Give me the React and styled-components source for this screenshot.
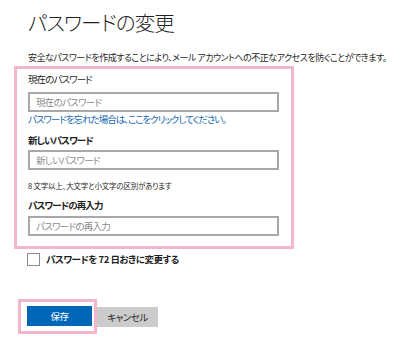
import React from "react";
import styled, { createGlobalStyle } from "styled-components";

const Global = createGlobalStyle`
  html, body { margin: 0; padding: 0; background: #fff; }
  body {
    font-family: "Noto Sans CJK JP", "Noto Sans", sans-serif;
    font-feature-settings: "palt";
    color: #262626;
  }
  * { box-sizing: border-box; }
`;

const Page = styled.div`
  width: 400px;
  height: 347px;
  padding: 9px 0 0 14px;
  display: flex;
  flex-direction: column;
  align-items: flex-start;
`;

const Title = styled.h1`
  margin: 0 0 0 14px;
  font-size: 20.5px;
  line-height: 26px;
  font-weight: 300;
  color: #1f1f1f;
  letter-spacing: -0.9px;
`;

const Intro = styled.p`
  margin: 17px 0 0 14px;
  font-size: 9px;
  line-height: 12px;
  letter-spacing: -0.5px;
  color: #262626;
  white-space: nowrap;
`;

const FormBox = styled.div`
  width: 280px;
  margin-top: 2px;
  border: 3px solid #f4b6cc;
  padding: 3px 12px 10px 11px;
  display: flex;
  flex-direction: column;
`;

const Label = styled.div`
  font-size: 9.5px;
  line-height: 14px;
  letter-spacing: -0.9px;
  font-weight: ${(p) => (p.$bold ? 700 : 400)};
  color: #1f1f1f;
  margin-top: ${(p) => p.$mt || 0}px;
`;

const Input = styled.input`
  width: 251px;
  height: 20px;
  margin-top: ${(p) => p.$mt || 0}px;
  border: 2px solid #a8a8a8;
  padding: 0 6px;
  font-family: inherit;
  font-feature-settings: "palt";
  font-size: 9.5px;
  letter-spacing: -0.7px;
  outline: none;
  background: #fff;
  &::placeholder { color: #8a8a8a; }
`;

const Link = styled.a`
  font-size: 9.5px;
  line-height: 14px;
  letter-spacing: -1px;
  color: #1668b4;
  text-decoration: none;
  cursor: pointer;
`;

const Hint = styled.div`
  margin-top: 10px;
  font-size: 7.5px;
  line-height: 12px;
  letter-spacing: -0.2px;
  color: #262626;
`;

const CheckRow = styled.label`
  display: flex;
  align-items: center;
  gap: 6px;
  margin: 3px 0 0 13px;
  font-size: 9.5px;
  font-weight: 700;
  letter-spacing: -0.5px;
  color: #1f1f1f;
  line-height: 14px;
`;

const Box = styled.span`
  width: 13px;
  height: 13px;
  border: 1px solid #8c8c8c;
  background: #fff;
  display: inline-block;
`;

const Actions = styled.div`
  display: flex;
  align-items: center;
  margin: 33px 0 0 4px;
`;

const Highlight = styled.span`
  display: inline-flex;
  border: 3px solid #f4b6cc;
  padding: 4px 2px 5px 6px;
`;

const Button = styled.button`
  height: 20px;
  width: ${(p) => p.$w}px;
  border: none;
  padding: 0;
  font-family: inherit;
  font-feature-settings: "palt";
  font-size: 9.5px;
  letter-spacing: -0.5px;
  background: ${(p) => (p.$primary ? "#0067b8" : "#cccccc")};
  color: ${(p) => (p.$primary ? "#ffffff" : "#262626")};
`;

export default function App() {
  return (
    <>
      <Global />
      <Page>
        <Title>パスワードの変更</Title>
        <Intro>安全なパスワードを作成することにより、メール アカウントへの不正なアクセスを防ぐことができます。</Intro>
        <FormBox>
          <Label>現在のパスワード</Label>
          <Input $mt={6} type="password" placeholder="現在のパスワード" />
          <Link>パスワードを忘れた場合は、ここをクリックしてください。</Link>
          <Label $bold $mt={7}>新しいパスワード</Label>
          <Input $mt={3} type="password" placeholder="新しいパスワード" />
          <Hint>8 文字以上、大文字と小文字の区別があります</Hint>
          <Label $bold $mt={6}>パスワードの再入力</Label>
          <Input $mt={4} type="password" placeholder="パスワードの再入力" />
        </FormBox>
        <CheckRow>
          <Box />
          パスワードを 72 日おきに変更する
        </CheckRow>
        <Actions>
          <Highlight>
            <Button $primary $w={65}>保存</Button>
          </Highlight>
          <Button $w={61}>キャンセル</Button>
        </Actions>
      </Page>
    </>
  );
}
